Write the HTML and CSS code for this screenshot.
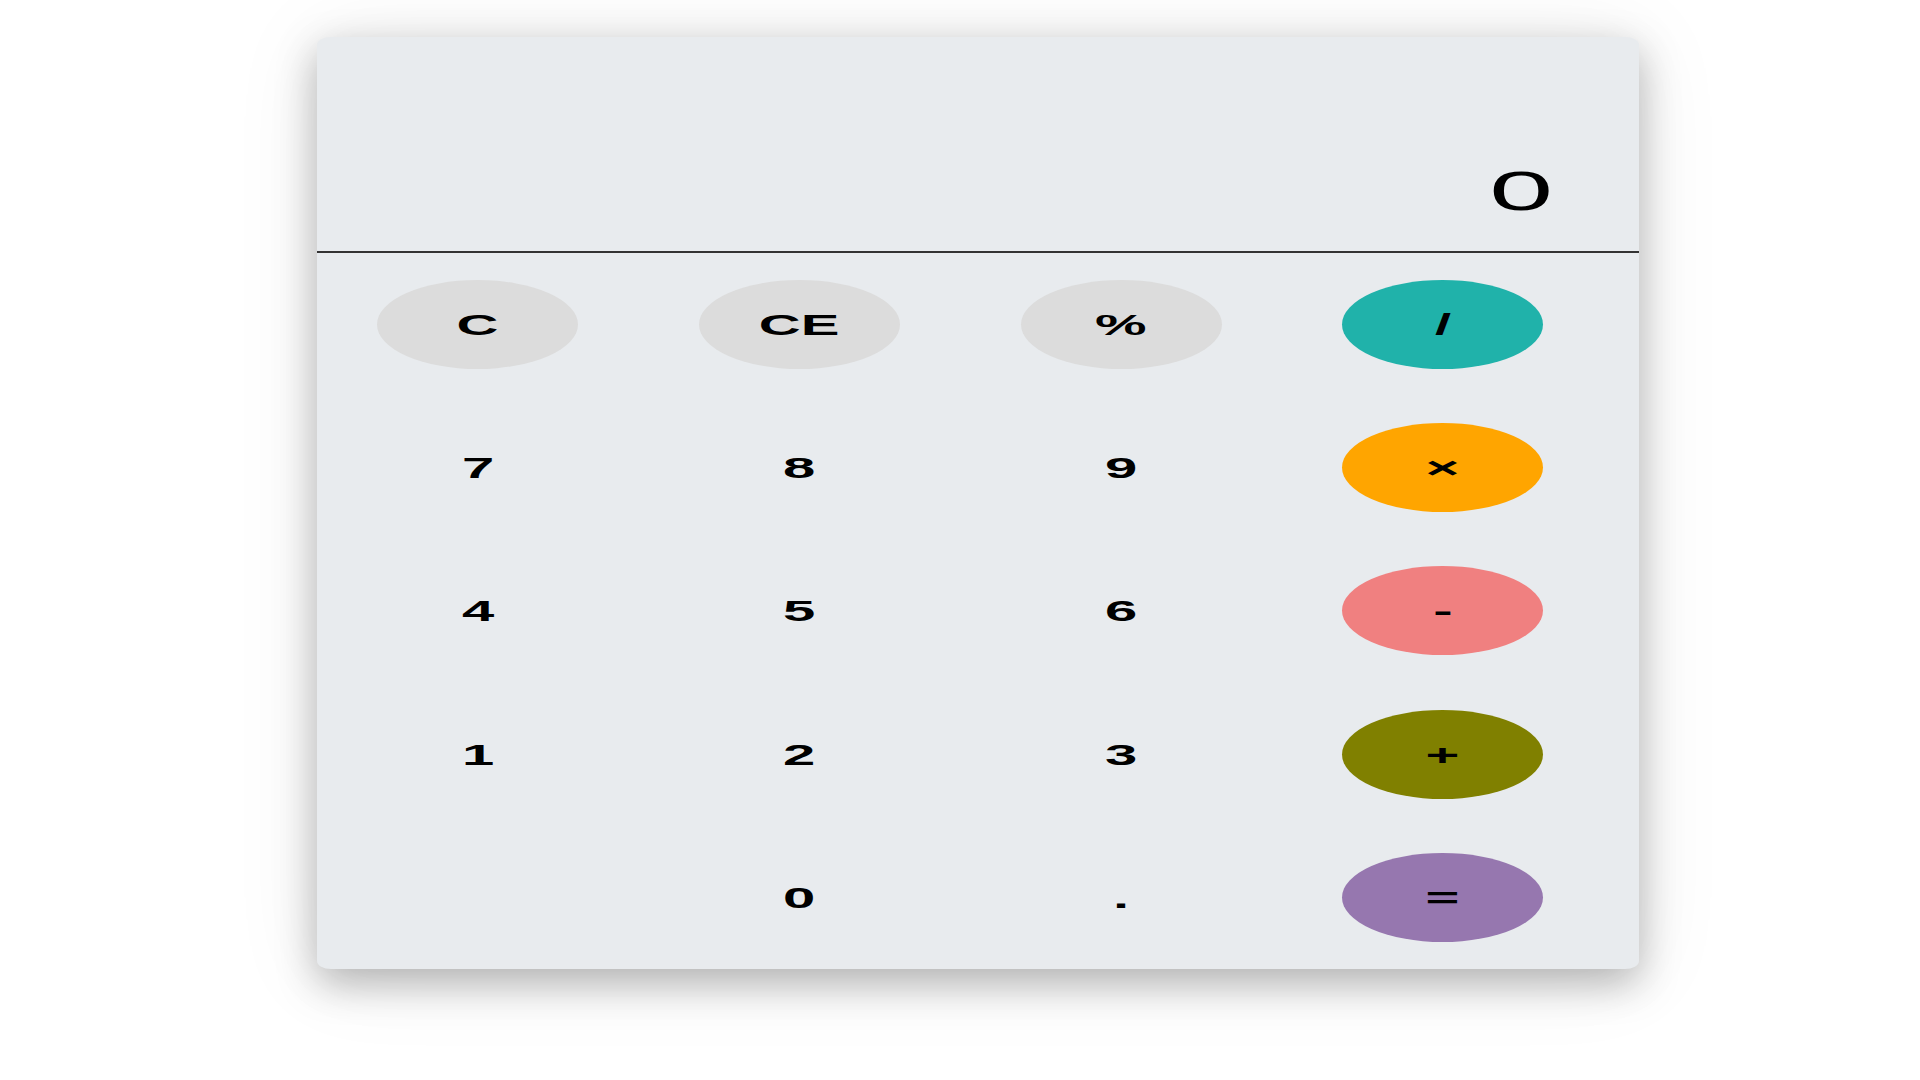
FILE: index.html
```html
<!DOCTYPE html>
<html lang="en">
<head>
<meta charset="utf-8">
<title>Calculator</title>
<link rel="stylesheet" href="styles.css">
</head>
<body>
<div class="page">
  <div class="calc">
    <div class="display"><span class="display-value">0</span></div>
    <div class="keys">
      <div class="cell"><button class="key key-fn"><span class="lbl">C</span></button></div>
      <div class="cell"><button class="key key-fn"><span class="lbl">CE</span></button></div>
      <div class="cell"><button class="key key-fn"><span class="lbl">%</span></button></div>
      <div class="cell"><button class="key key-div"><span class="lbl">/</span></button></div>

      <div class="cell"><button class="key"><span class="lbl">7</span></button></div>
      <div class="cell"><button class="key"><span class="lbl">8</span></button></div>
      <div class="cell"><button class="key"><span class="lbl">9</span></button></div>
      <div class="cell"><button class="key key-mul"><span class="lbl">&times;</span></button></div>

      <div class="cell"><button class="key"><span class="lbl">4</span></button></div>
      <div class="cell"><button class="key"><span class="lbl">5</span></button></div>
      <div class="cell"><button class="key"><span class="lbl">6</span></button></div>
      <div class="cell"><button class="key key-sub"><span class="lbl">-</span></button></div>

      <div class="cell"><button class="key"><span class="lbl">1</span></button></div>
      <div class="cell"><button class="key"><span class="lbl">2</span></button></div>
      <div class="cell"><button class="key"><span class="lbl">3</span></button></div>
      <div class="cell"><button class="key key-add"><span class="lbl">+</span></button></div>

      <div class="cell"></div>
      <div class="cell"><button class="key"><span class="lbl">0</span></button></div>
      <div class="cell"><button class="key"><span class="lbl">.</span></button></div>
      <div class="cell"><button class="key key-eq"><span class="lbl">=</span></button></div>
    </div>
  </div>
</div>
</body>
</html>
```
FILE: styles.css
```css
* { box-sizing: border-box; }

html, body {
  margin: 0;
  padding: 0;
  background: #ffffff;
  width: 1920px;
  height: 1080px;
  overflow: hidden;
}

body {
  font-family: "Liberation Sans", Arial, sans-serif;
  color: #000;
}

.page {
  padding: 37px 0 0 317px;
}

.calc {
  width: 1322px;
  height: 932px;
  background: #e8ebee;
  border-radius: 14px / 8px;
  box-shadow: 0 14px 40px rgba(0, 0, 0, 0.28), 0 4px 90px rgba(0, 0, 0, 0.08);
  display: flex;
  flex-direction: column;
  overflow: hidden;
}

.display {
  height: 216px;
  border-bottom: 2px solid #333;
  display: flex;
  justify-content: flex-end;
  align-items: flex-end;
  padding: 0 86px 32px 0;
}

.display-value {
  display: inline-block;
  font-size: 56px;
  line-height: 56px;
  font-weight: 400;
  transform: scaleX(2.05);
  transform-origin: right center;
}

.keys {
  flex: 1;
  display: grid;
  grid-template-columns: repeat(4, 321.67px);
  grid-template-rows: repeat(5, 1fr);
}

.cell {
  display: flex;
  align-items: center;
  justify-content: center;
}

.key {
  width: 201px;
  height: 89px;
  border: none;
  border-radius: 50%;
  background: transparent;
  padding: 0;
  margin: 0;
  display: flex;
  align-items: center;
  justify-content: center;
  font-family: "Liberation Sans", Arial, sans-serif;
  font-weight: 700;
  font-size: 29px;
  color: #000;
  cursor: pointer;
}

.lbl {
  display: inline-block;
  line-height: 29px;
  margin-top: 2px;
  transform: scaleX(2.0);
}

.key-fn { background: #dcdcdc; }
.key-div { background: #20b2aa; }
.key-mul { background: #ffa500; }
.key-sub { background: #f08080; }
.key-add { background: #808000; }
.key-eq { background: #9677af; }
```
